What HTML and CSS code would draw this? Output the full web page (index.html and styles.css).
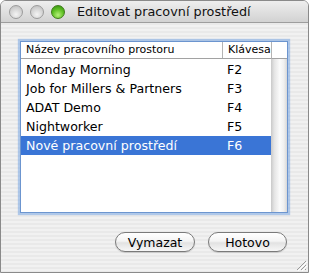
FILE: index.html
```html
<!DOCTYPE html>
<html>
<head>
    <title>Editovat pracovní prostředí</title>
    <link rel="stylesheet" href="styles.css">
</head>
<body>
    <div class="window">
        <div class="titlebar">
            <div class="lights">
                <span class="light gray"></span>
                <span class="light gray"></span>
                <span class="light green"></span>
            </div>
            <div class="title">Editovat pracovní prostředí</div>
        </div>

        <div class="content">
            <div class="table">
                <div class="rows">
                    <div class="row head">
                        <div class="cell name">Název pracovního prostoru</div>
                        <div class="cell key">Klávesa</div>
                    </div>
                    <div class="row">
                        <div class="cell name">Monday Morning</div>
                        <div class="cell key">F2</div>
                    </div>
                    <div class="row">
                        <div class="cell name">Job for Millers &amp; Partners</div>
                        <div class="cell key">F3</div>
                    </div>
                    <div class="row">
                        <div class="cell name">ADAT Demo</div>
                        <div class="cell key">F4</div>
                    </div>
                    <div class="row">
                        <div class="cell name">Nightworker</div>
                        <div class="cell key">F5</div>
                    </div>
                    <div class="row selected">
                        <div class="cell name">Nové pracovní prostředí</div>
                        <div class="cell key">F6</div>
                    </div>
                </div>
                <div class="scroll">
                    <div class="corner"></div>
                    <div class="track"></div>
                </div>
            </div>

            <div class="buttons">
                <button class="btn wide">Vymazat</button>
                <button class="btn">Hotovo</button>
            </div>

            <svg class="grip" width="12" height="12" viewBox="0 0 12 12">
                <line x1="11" y1="2" x2="2" y2="11" stroke="#9a9a9a" />
                <line x1="11" y1="6" x2="6" y2="11" stroke="#9a9a9a" />
                <line x1="11" y1="10" x2="10" y2="11" stroke="#9a9a9a" />
                <line x1="12" y1="3" x2="3" y2="12" stroke="#fff" />
                <line x1="12" y1="7" x2="7" y2="12" stroke="#fff" />
            </svg>
        </div>
    </div>
</body>
</html>
```

FILE: styles.css
```css
body {
    margin: 0;
    font-family: "DejaVu Sans", sans-serif;
    background-color: #ffffff;
}
.window {
    width: 309px;
    height: 273px;
    box-sizing: border-box;
    border: 1px solid #8a8a8a;
    border-radius: 6px 6px 0 0;
    overflow: hidden;
    display: flex;
    flex-direction: column;
}
.titlebar {
    height: 21px;
    flex-shrink: 0;
    display: flex;
    align-items: center;
    background: linear-gradient(#eeeeee, #d2d2d2);
    border-bottom: 1px solid #9d9d9d;
}
.lights {
    display: flex;
    gap: 7px;
    padding-left: 8px;
}
.light {
    width: 12px;
    height: 12px;
    border-radius: 50%;
    border: 1px solid #9b9b9b;
}
.light.gray {
    background: radial-gradient(circle at 50% 70%, #f4f4f4 0, #d4d4d4 55%, #b8b8b8 100%);
}
.light.green {
    border-color: #3f7d1a;
    background: radial-gradient(circle at 50% 75%, #b6f07a 0, #62c227 50%, #2f8a0c 100%);
}
.title {
    margin-left: 12px;
    font-size: 12.8px;
    color: #111;
}
.content {
    flex: 1;
    position: relative;
    padding: 18px 20px 0 19px;
    background: repeating-linear-gradient(#e9e9e9 0 2px, #f1f1f1 2px 4px);
}
.table {
    height: 170px;
    display: flex;
    background-color: #fff;
    border: 1px solid #6c95cf;
    box-shadow: 0 0 1px 2px rgba(120, 165, 225, 0.55);
}
.rows {
    flex: 1;
}
.row {
    display: flex;
    height: 19px;
    align-items: center;
    font-size: 12.6px;
    color: #000;
}
.row.head {
    height: 16px;
    font-size: 11px;
    border-bottom: 1px solid #a2a2a2;
    margin-bottom: 1px;
}
.row.selected {
    background-color: #3a75d6;
    color: #fff;
}
.cell {
    padding-left: 5px;
    box-sizing: border-box;
}
.name {
    width: 201px;
}
.key {
    flex: 1;
}
.head .key {
    border-left: 1px solid #b4b4b4;
    height: 16px;
    line-height: 16px;
}
.head .name {
    line-height: 16px;
}
.scroll {
    width: 16px;
    display: flex;
    flex-direction: column;
}
.corner {
    height: 16px;
    border-bottom: 1px solid #a2a2a2;
    border-left: 1px solid #b4b4b4;
}
.track {
    flex: 1;
    background: linear-gradient(to right, #c9c9c9, #e4e4e4 20%, #fbfbfb 55%, #f0f0f0 80%, #d8d8d8);
}
.buttons {
    display: flex;
    justify-content: flex-end;
    gap: 13px;
    margin-top: 19px;
    margin-right: 1px;
}
.btn {
    width: 79px;
    height: 20px;
    padding: 0;
    border: 1px solid #7a7a7a;
    border-radius: 10px;
    font-family: "DejaVu Sans", sans-serif;
    font-size: 12.5px;
    color: #000;
    background: linear-gradient(#ffffff, #f4f4f4 45%, #e2e2e2 55%, #f7f7f7);
    box-shadow: 0 1px 1px rgba(0, 0, 0, 0.15);
}
.btn.wide {
    width: 80px;
}
.grip {
    position: absolute;
    right: 1px;
    bottom: 1px;
}
```
